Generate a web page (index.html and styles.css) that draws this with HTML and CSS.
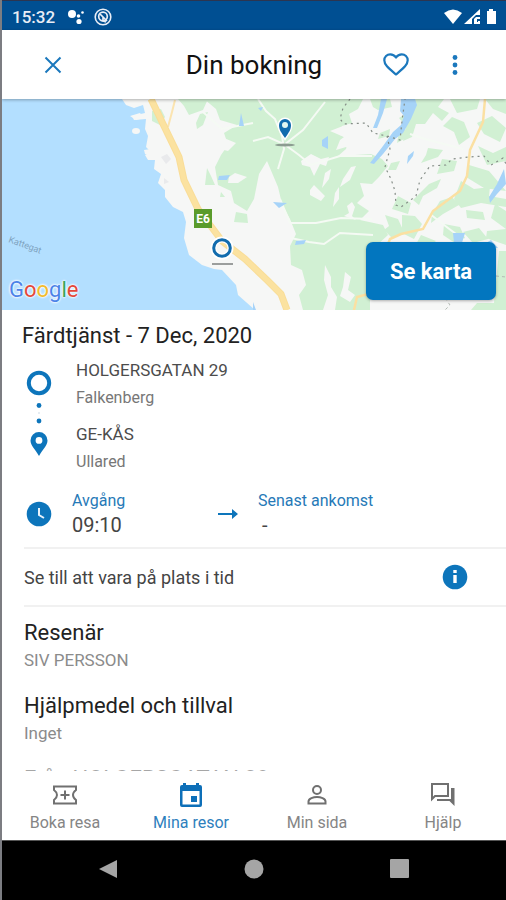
FILE: index.html
```html
<!DOCTYPE html>
<html lang="sv">
<head>
<meta charset="utf-8">
<meta name="viewport" content="width=device-width, initial-scale=1">
<title>Din bokning</title>
<link rel="stylesheet" href="styles.css">
</head>
<body>
<div class="phone">
  <div class="status">
    <span class="status-time">15:32</span>
    <svg class="status-dots" width="18" height="16" viewBox="0 0 18 16" fill="#fff"><circle cx="5" cy="5" r="4"/><circle cx="11.500" cy="7" r="1.800"/><circle cx="15.500" cy="3.500" r="1.300"/><circle cx="12" cy="12.500" r="2.600"/></svg>
    <svg class="status-ring" width="18" height="18" viewBox="0 0 18 18" fill="none" stroke="#e8edf6"><circle cx="9" cy="9" r="7.800" stroke-width="1.600"/><circle cx="9" cy="8.500" r="4.300" stroke-width="1.700"/><path d="M6 6l7 7M9 9v4l3 1" stroke-width="1.700"/></svg>
    <svg class="status-signal" width="54" height="18" viewBox="0 0 54 18" fill="#fff"><path d="M0 5Q9-2 18 5L9 16z"/><path d="M20 16L36 1v6h-4l-4 4v5zM30 16v-5l2-2h4v2h-3v3h1v-1h2v3z"/><path d="M45 1h4v2h3v13H43V3h2z"/></svg>
  </div>

  <header class="bar">
    <button class="icon-btn" aria-label="Stäng"><svg width="18" height="18" viewBox="0 0 18 18" fill="none" stroke="#1b78bd" stroke-width="2"><path d="M1.500 1.500l15 15M16.500 1.500l-15 15"/></svg></button>
    <h1>Din bokning</h1>
    <button class="icon-btn" aria-label="Favorit"><svg width="26" height="23" viewBox="0 0 26 23" fill="none" stroke="#1b78bd" stroke-width="2.200" stroke-linejoin="round"><path d="M13 21.500C6 15.500 1.300 12 1.300 7.300C1.300 3.800 4 1.300 7.200 1.300C9.500 1.300 11.700 2.500 13 4.500C14.300 2.500 16.500 1.300 18.800 1.300C22 1.300 24.700 3.800 24.700 7.300C24.700 12 20 15.500 13 21.500z"/></svg></button>
    <button class="icon-btn" aria-label="Mer"><svg width="6" height="20" viewBox="0 0 6 20" fill="#1b78bd"><circle cx="3" cy="2.500" r="2.400"/><circle cx="3" cy="10" r="2.400"/><circle cx="3" cy="17.500" r="2.400"/></svg></button>
  </header>

  <section class="map" aria-label="Karta">
    <svg class="map-art" viewBox="0 0 504 211" preserveAspectRatio="xMidYMid slice">
      <rect width="504" height="211" fill="#f6f7f6"/>
      <g transform="translate(-2 0)">
      <path fill="#b3dfff" d="M0 0H122L126 6L134 9L143 6L145 14L132 17L134 21L146 20L145 30L148 37L146 48L151 53L145 56L148 61L155 61L154 70L161 75L158 84L165 91L165 98L173 108L183 113L186 123L184 139L189 156L202 166L214 170L222 171L236 186L238 196L255 211H0z"/>
      <g fill="#f6f7f6"><ellipse cx="136" cy="32" rx="4" ry="3"/><path d="M144 51l7-1 1 7-7-2zM130 17l10-3 4 5-8 2z"/></g>
      <g fill="#d1f0d3">
        <path d="M152 12l9-2 4 8-5 8-8-4zM178 0h30l-5 11-14 5-5-9zM200 15l8-2-5 13-6 4-1-6zM207 69l4 8 4 9-10 0zM221 93l4 5-5 0zM236 113l11 2 1 9-14-1z"/>
        <path d="M204 0H363L358 10L349 15L352 24L342 27L340 36L349 40L346 50L338 57L355 56L371 55L382 60L388 67L379 78L372 85L360 84L364 97L357 104L369 112L360 121L383 126L388 136L376 147L370 160V211H303L299 196L306 186L302 171L291 166L290 147L296 135L290 120L282 105L278 88L267 62L259 75L254 100L247 112L234 104L231 92L218 86L215 68L221 56L228 46L224 34L237 26L220 21L216 10z"/>
        <path d="M370 0h20l2 8-14 3-5-3zM402 0h42l-6 8 11 6-7 8-9-8-8 11-9 0-4 13-9 4 3-15-7-8 9-6zM450 0h30l-3 10-20 4zM485 0h21v15l-13-5zM452 18l12 5 6 15-11 8-5-13-11-6zM477 24l15-7 14 12-6 14-16-8zM478 47l15 7 13-6v14l-19 4zM428 49l15 2-5 7-17 6 5-8zM442 60l15 2-3 10-17 3zM469 66l20 6 17 20-22-3-18-11zM461 82l13 8 16-2-1 9 17 3v8l-25-4-20 5-7-9zM429 85l12-5-4 9-14 8-4 9-6-5zM398 97l13 7-3 11-16-5zM385 116l13 4 6 13-12 6-8-8 5-4zM402 116l13 1 7 8-8 15-12-6zM440 102l12-4 7 8-16 9-12 9 1-9zM466 111l17 2 2 8-18-2zM495 105l11 7v18l-15-11zM421 136l15 6-10 8-12-1zM444 125l16 3 5 11-10 5-12-8zM463 133l16-4 9 11-15 4zM487 132l19-2v16l-20-7zM383 148l18 2-3 8-20 2zM499 152h7v59h-35l6-7 17 0z"/>
        <path d="M351 60l13-1-5 8-9 2zM345 78l12-5-4 10-12 7zM380 34l10-4-1 7-11 3zM391 64l9-2-4 9-8 0zM399 33l8-3-3 10-7 4z"/>
      </g>
      <g fill="#f6f7f6">
        <path d="M301 62l10-7 10 5 8-2-3 9-6-2-6 12-4-9-8-2zM310 91l4-5 5 5 6 6-4 5-11-6zM325 74l6-4-2 10-7 9zM343 80l8-12 5-1-6 14-10 7zM335 94l4-6 0 12-6 8zM347 107l5-4 3 5-3 9 4 4-12-4 5-3zM343 27h10l-2 8 7 5-3 13-9-5-10 3 4-10 4-3-14-6zM325 166l6 12 0 10 6 10-2 13h-12l5-15-4-15zM345 173l6 5-3 13 7 5-5 7-10-6 3-9zM224 39l12 5-8 8-8-2zM235 74l12 4-9 6-10 0 1-6z"/>
      </g>
      <g fill="none" stroke="#f5faf4" stroke-width="2">
        <path d="M258 0L266 12L275 20L282 37L284 50L278 70M284 46L303 31L325 3M253 42L268 38L284 45L299 56L311 66L340 57L372 57M203 13L222 30L253 24M280 100L290 124L316 124L341 119L372 120M291 139L309 143L324 145L340 134L373 136M410 35L425 40L463 50M430 115L448 129L464 141"/>
      </g>
      <g fill="#a6d3f8">
        <path d="M381 0h6l-4 14-6 15-4 0 5-13zM401 0h14l2 6-6 14-8 14-8 6-12 15-9 10-4-1 13-17 10-14 8-7 3-9-4-5zM408 57l6-5-1 5-6 8zM322 41l6-4v13l-6-3zM241 14l3 13-5 0zM273 103l14 1-8 5zM296 142l10-1-2 4-9 1zM453 134l12 0-4 13-7-3zM470 144l7 0 0 5-7 0zM486 144l5-3 7 8-12 0zM504 70l2 15-9 10-7 9-1-6 8-13zM219 77l11-1-3 5-9 0zM258 9l5-1-2 4zM253 203l3 8h-3z"/>
      </g>
      <g fill="none" stroke="#858d87" stroke-width="1.200" stroke-dasharray="2 4">
        <path d="M350 0L343 9L340 20L344 25L366 24L373 34L387 37L400 41L402 22L405 0M387 37L390 50L385 68L391 80L395 92L396 106L401 108L416 97L420 81L430 67L446 66L452 60L469 58L484 57L491 66L503 59L506 65"/>
      </g>
      <path d="M445 199l5 7-5 5M496 177l10 1" stroke="#b4bbb5" stroke-dasharray="3 3" fill="none"/>
      <path d="M386 150L390 140L401 135L423 130L433 112L460 92L467 77L470 51L483 23L485 0M354 211L357 198L372 194" fill="none" stroke="#fbe0a2" stroke-width="2.500"/>
      <path d="M175 1L172 13L168 28" fill="none" stroke="#fbe4b0" stroke-width="2"/>
      <path d="M151 0L164 27L179 58L184 81L198 110L222 142L245 160L267 181L281 195L287 211" fill="none" stroke="#f9dd98" stroke-width="7" stroke-linejoin="round"/>
      <path d="M151 0L164 27L179 58L184 81L198 110L222 142L245 160L267 181L281 195L287 211" fill="none" stroke="#fbe2a0" stroke-width="5" stroke-linejoin="round"/>
      <path d="M161 58l6-3 4 5-5 5zM164 79l5 4-5 2z" fill="#e9eaec"/>
      <rect x="194" y="110" width="18" height="19" fill="#5a9b2b"/>
      <text class="map-road" x="203" y="124" text-anchor="middle">E6</text>
      <text class="map-sea" transform="translate(8 143) rotate(20)">Kattegat</text>
      <path d="M212 164h21v2h-21z" fill="#9b9e9d"/>
      <circle cx="222" cy="149" r="8.500" fill="none" stroke="#fff" stroke-width="6"/><circle cx="222" cy="149" r="8.300" fill="none" stroke="#126cae" stroke-width="3"/>
      <ellipse cx="285" cy="46" rx="10" ry="1.500" fill="#8c9c91"/>
      <path d="M285 39C281 33 279 31 279 26A6 6 0 0 1 291 26C291 31 289 33 285 39z" fill="#126cae" stroke="#fff" stroke-width="3" paint-order="stroke"/><circle cx="285" cy="26" r="3" fill="#e3f7f1"/>
      </g>
    </svg>
    <div class="google" aria-label="Google"><span class="g-blue">G</span><span class="g-red">o</span><span class="g-yellow">o</span><span class="g-blue">g</span><span class="g-green">l</span><span class="g-red">e</span></div>
    <button class="map-btn">Se karta</button>
  </section>

  <main class="content">
    <h2 class="trip-title">Färdtjänst - 7 Dec, 2020</h2>
    <div class="route">
      <svg class="route-rail" width="26" height="88" viewBox="0 0 26 88" fill="#0d75bb"><circle cx="13" cy="13" r="10.200" fill="none" stroke="#0d75bb" stroke-width="4"/><circle cx="13" cy="35.500" r="2.400"/><circle cx="13" cy="43" r="1" fill="#dce6ee"/><circle cx="13" cy="51" r="2.400"/><path fill-rule="evenodd" d="M13 86C9 79 4.500 75.500 4.500 70.500A8.500 8.500 0 0 1 21.500 70.500C21.500 75.500 17 79 13 86zM13 67a3.400 3.400 0 1 0 0 6.800a3.400 3.400 0 0 0 0-6.800z"/></svg>
      <div class="stops">
        <div class="stop"><p class="place">HOLGERSGATAN 29</p><p class="town">Falkenberg</p></div>
        <div class="stop"><p class="place">GE-KÅS</p><p class="town">Ullared</p></div>
      </div>
    </div>
    <div class="times">
      <svg width="26" height="26" viewBox="0 0 26 26"><circle cx="13" cy="13" r="12.300" fill="#0d75bb"/><path d="M13 7v7l5 3" fill="none" stroke="#e9f3fb" stroke-width="2"/></svg>
      <div class="time"><p class="time-label">Avgång</p><p class="time-value">09:10</p></div>
      <svg width="20" height="10" viewBox="0 0 20 10" fill="#0d75bb"><path d="M0 4h14V0l6 5-6 5V6H0z"/></svg>
      <div class="time"><p class="time-label">Senast ankomst</p><p class="time-value none">-</p></div>
    </div>
    <div class="notice">
      <p>Se till att vara på plats i tid</p>
      <button class="icon-btn" aria-label="Information"><svg width="26" height="26" viewBox="0 0 26 26"><circle cx="13" cy="13" r="12.300" fill="#0d75bb"/><path d="M11.300 6h3.400v3h-3.400zM11.300 11h3.400v8h-3.400z" fill="#fff"/></svg></button>
    </div>
    <div class="details">
      <section><h2>Resenär</h2><p>SIV PERSSON</p></section>
      <section><h2>Hjälpmedel och tillval</h2><p>Inget</p></section>
      <section class="next"><h2>Från HOLGERSGATAN 29</h2></section>
    </div>
  </main>

  <nav class="tabs">
    <a href="#boka"><svg width="26" height="26" viewBox="0 0 26 26" fill="none" stroke="#707070" stroke-width="2"><path d="M2 8V4.500h22V8c-2 1.500-3 3-3 5s1 3.500 3 5v3.500H2V18c2-1.500 3-3 3-5s-1-3.500-3-5zM13 8.500v9M8.500 13h9"/></svg><span>Boka resa</span></a>
    <a href="#resor" class="active"><svg width="26" height="26" viewBox="0 0 26 26" fill="#0d6fb8"><path fill-rule="evenodd" d="M5 1h3v2h10V1h3v2h1q2 0 2 2v18q0 2-2 2H4q-2 0-2-2V5q0-2 2-2h1zM4.500 9v13.500h17V9z"/><path d="M13 14h6v6h-6z"/></svg><span>Mina resor</span></a>
    <a href="#sida"><svg width="26" height="26" viewBox="0 0 26 26" fill="none" stroke="#707070" stroke-width="2"><circle cx="13" cy="8" r="4"/><path d="M4.500 21.500v-2c0-3 5-4.500 8.500-4.500s8.500 1.500 8.500 4.500v2z"/></svg><span>Min sida</span></a>
    <a href="#hjalp"><svg width="26" height="26" viewBox="0 0 26 26" fill="none" stroke="#707070" stroke-width="2"><path d="M2 2h16v12H5l-3 3z"/><path d="M7 17h14v-11h3.500v18l-5-5H7z" fill="#707070" stroke="none"/></svg><span>Hjälp</span></a>
  </nav>

  <div class="system">
    <button aria-label="Tillbaka"><svg width="20" height="20" viewBox="0 0 20 20" fill="#a5a5a5"><path d="M1 10L19 1v18z"/></svg></button>
    <button aria-label="Hem"><svg width="20" height="20" viewBox="0 0 20 20" fill="#a5a5a5"><circle cx="10" cy="10" r="9.500"/></svg></button>
    <button aria-label="Översikt"><svg width="20" height="20" viewBox="0 0 20 20" fill="#a5a5a5"><rect width="19" height="19" rx="1"/></svg></button>
  </div>
</div>
</body>
</html>
```
FILE: styles.css
```css
* { box-sizing: border-box; }

body {
  margin: 0;
  font-family: Roboto, "Liberation Sans", sans-serif;
  color: #222;
  background: #fff;
}

h1, h2, p { margin: 0; font-weight: 400; }

svg { display: block; flex: none; }

button {
  padding: 0;
  border: 0;
  background: none;
  font: inherit;
  color: inherit;
}

.phone {
  display: flex;
  flex-direction: column;
  height: 100vh;
  border-left: 2px solid #7c7d82;
  overflow: hidden;
}

.status {
  display: flex;
  align-items: center;
  flex: none;
  height: 30px;
  padding: 2px 8px 0 10px;
  border-top: 1px solid #2c3550;
  background: #004f92;
  color: #e8edf6;
}

.status-time { font-size: 17px; font-weight: 500; }
.status-dots { margin-left: 12px; }
.status-ring { margin-left: 9px; }
.status-signal { margin-left: auto; }

.bar {
  position: relative;
  display: grid;
  grid-template-columns: 102px 1fr 60px 58px;
  align-items: center;
  flex: none;
  height: 69px;
  padding-right: 22px;
  box-shadow: 0 1px 3px rgba(0, 0, 0, 0.3);
  z-index: 1;
}

.bar h1 {
  padding-left: 38px;
  text-align: center;
  font-size: 26px;
  line-height: 32px;
  color: #111;
  white-space: nowrap;
}

.icon-btn { display: grid; place-items: center; min-height: 40px; }

.map { position: relative; flex: none; height: 211px; }
.map-art { width: 100%; height: 100%; }
.map-road { font-size: 12px; font-weight: 700; fill: #fff; }
.map-sea { font-size: 9px; fill: #7fa3c0; }

.google {
  position: absolute;
  left: 7px;
  bottom: 7px;
  font-size: 22px;
  line-height: 26px;
  text-shadow: 0 0 2px #fff, 0 0 2px #fff, 0 0 3px #fff;
}

.g-blue { color: #4c83e8; }
.g-red { color: #e3483b; }
.g-yellow { color: #f2bb2c; }
.g-green { color: #38a457; }

.map-btn {
  position: absolute;
  right: 10px;
  bottom: 10px;
  width: 130px;
  height: 58px;
  border-radius: 7px;
  background: #0276bf;
  box-shadow: 0 1px 3px rgba(0, 0, 0, 0.3);
  color: #fff;
  font-size: 22px;
  font-weight: 700;
}

.content { flex: 1; min-height: 0; overflow: hidden; padding-top: 11px; }

.trip-title {
  padding-left: 20px;
  font-size: 22px;
  line-height: 30px;
}

.route { display: flex; gap: 24px; padding: 6px 24px 0; }
.route-rail { margin-top: 13px; }
.stops { display: grid; gap: 10px; }
.place { font-size: 17px; line-height: 27px; color: #4c4c4c; }
.town { font-size: 16px; line-height: 27px; color: #777; }

.times {
  display: grid;
  grid-template-columns: 26px 126px 20px 1fr;
  column-gap: 20px;
  align-items: center;
  margin-left: 24px;
  padding: 15px 0 9px;
}

.time-label { font-size: 16px; line-height: 22px; color: #2679b7; }
.time-value { font-size: 20px; line-height: 26px; color: #444; }
.none { padding-left: 4px; }

.notice {
  display: flex;
  align-items: center;
  justify-content: space-between;
  height: 60px;
  margin-left: 22px;
  padding-right: 38px;
  border-top: 2px solid #f1f1f1;
  border-bottom: 2px solid #f1f1f1;
  font-size: 18px;
  color: #444;
}

.details {
  display: grid;
  gap: 19px;
  padding: 11px 22px 0;
}

.details h2 { font-size: 22px; line-height: 30px; }
.details p { font-size: 17px; line-height: 24px; color: #8b8b8b; }
.details .next h2 { color: #a6a6a6; }

.tabs {
  display: grid;
  grid-template-columns: repeat(4, 1fr);
  flex: none;
  height: 69px;
  padding-top: 11px;
  background: #fff;
}

.tabs a {
  display: flex;
  flex-direction: column;
  align-items: center;
  gap: 5px;
  font-size: 16px;
  line-height: 20px;
  color: #858585;
  text-decoration: none;
}

.tabs .active { color: #2e7fbd; }

.system {
  display: flex;
  align-items: center;
  justify-content: center;
  gap: 126px;
  flex: none;
  height: 60px;
  padding-bottom: 3px;
  border-top: 1px solid #555;
  background: #000;
}
```
